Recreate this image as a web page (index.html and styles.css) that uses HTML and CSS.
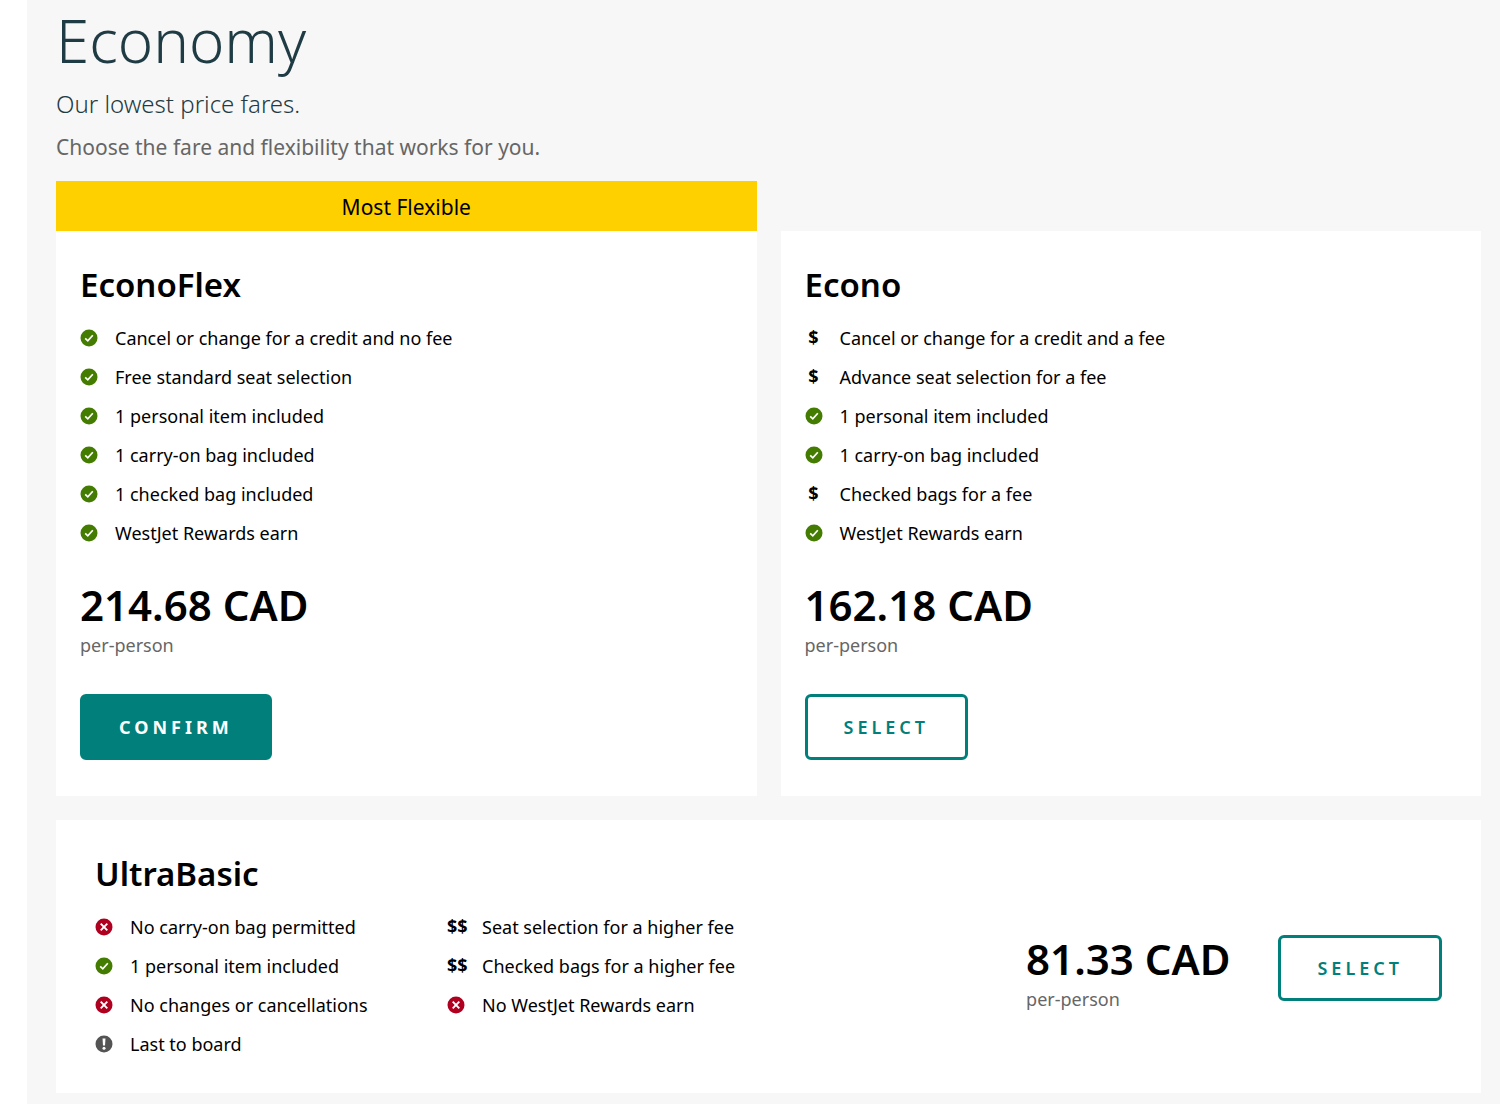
FILE: index.html
```html
<!DOCTYPE html>
<html lang="en">
<head>
<meta charset="utf-8">
<meta name="viewport" content="width=device-width, initial-scale=1">
<title>Economy fares</title>
<link rel="stylesheet" href="styles.css">
</head>
<body>
<svg class="sprite" aria-hidden="true">
  <symbol id="yes" viewBox="0 0 18 18"><circle cx="9" cy="9" r="8.5" fill="#437c00"/><path d="M5.2 9.4l2.6 2.5 5-5.6" fill="none" stroke="#fff" stroke-width="1.7"/></symbol>
  <symbol id="no" viewBox="0 0 18 18"><circle cx="9" cy="9" r="8.5" fill="#b00020"/><path d="M5.7 5.7l6.6 6.6M12.3 5.7l-6.6 6.6" fill="none" stroke="#fff" stroke-width="1.9"/></symbol>
  <symbol id="note" viewBox="0 0 18 18"><circle cx="9" cy="9" r="8.5" fill="#545454"/><path d="M7.5 3.5h3l-.5 7H8z" fill="#fff"/><circle cx="9" cy="13.2" r="1.5" fill="#fff"/></symbol>
</svg>
<main class="cabin">
  <header>
    <h1 class="cabin-title">Economy</h1>
    <p class="cabin-lead">Our lowest price fares.</p>
    <p class="cabin-hint">Choose the fare and flexibility that works for you.</p>
  </header>

  <div class="fares">
    <section class="fare">
      <p class="ribbon">Most Flexible</p>
      <div class="card">
        <h2 class="fare-name">EconoFlex</h2>
        <ul class="features">
          <li><svg class="icon"><use href="#yes"/></svg>Cancel or change for a credit and no fee</li>
          <li><svg class="icon"><use href="#yes"/></svg>Free standard seat selection</li>
          <li><svg class="icon"><use href="#yes"/></svg>1 personal item included</li>
          <li><svg class="icon"><use href="#yes"/></svg>1 carry-on bag included</li>
          <li><svg class="icon"><use href="#yes"/></svg>1 checked bag included</li>
          <li><svg class="icon"><use href="#yes"/></svg>WestJet Rewards earn</li>
        </ul>
        <div class="cost">
          <p class="price">214.68 CAD</p>
          <p class="per">per-person</p>
        </div>
        <button type="button" class="btn btn-solid">CONFIRM</button>
      </div>
    </section>

    <section class="fare">
      <div class="card">
        <h2 class="fare-name">Econo</h2>
        <ul class="features">
          <li><span class="fee">$</span>Cancel or change for a credit and a fee</li>
          <li><span class="fee">$</span>Advance seat selection for a fee</li>
          <li><svg class="icon"><use href="#yes"/></svg>1 personal item included</li>
          <li><svg class="icon"><use href="#yes"/></svg>1 carry-on bag included</li>
          <li><span class="fee">$</span>Checked bags for a fee</li>
          <li><svg class="icon"><use href="#yes"/></svg>WestJet Rewards earn</li>
        </ul>
        <div class="cost">
          <p class="price">162.18 CAD</p>
          <p class="per">per-person</p>
        </div>
        <button type="button" class="btn">SELECT</button>
      </div>
    </section>

    <section class="card card-wide">
      <div>
        <h2 class="fare-name">UltraBasic</h2>
        <div class="feature-columns">
          <ul class="features">
            <li><svg class="icon"><use href="#no"/></svg>No carry-on bag permitted</li>
            <li><svg class="icon"><use href="#yes"/></svg>1 personal item included</li>
            <li><svg class="icon"><use href="#no"/></svg>No changes or cancellations</li>
            <li><svg class="icon"><use href="#note"/></svg>Last to board</li>
          </ul>
          <ul class="features">
            <li><span class="fee">$$</span>Seat selection for a higher fee</li>
            <li><span class="fee">$$</span>Checked bags for a higher fee</li>
            <li><svg class="icon"><use href="#no"/></svg>No WestJet Rewards earn</li>
          </ul>
        </div>
      </div>
      <div class="buy">
        <div class="cost">
          <p class="price">81.33 CAD</p>
          <p class="per">per-person</p>
        </div>
        <button type="button" class="btn">SELECT</button>
      </div>
    </section>
  </div>
</main>
</body>
</html>
```

FILE: styles.css
```css
* { box-sizing: border-box; }

body {
  margin: 0;
  background: #fff;
  color: #000;
  font-family: "Noto Sans", sans-serif;
  font-size: 18px;
}

h1, h2, p, ul { margin: 0; padding: 0; }

.sprite { display: none; }

.cabin {
  min-height: 100vh;
  margin-left: 27px;
  padding: 4px 19px 11px 29px;
  background: #f7f7f7;
}

.cabin-title {
  color: #1f3b44;
  font-size: 60px;
  font-weight: 300;
  line-height: 72px;
}

.cabin-lead {
  margin-top: 12px;
  color: #1f3b44;
  font-size: 24px;
  font-weight: 300;
  line-height: 32px;
}

.cabin-hint {
  margin: 13px 0 20px;
  color: #666;
  font-size: 21px;
  line-height: 28px;
}

.fares {
  display: grid;
  grid-template-columns: 1fr 1fr;
  gap: 24px;
}

.fare {
  display: flex;
  flex-direction: column;
  justify-content: flex-end;
}

.ribbon {
  padding-top: 2px;
  background: #ffd000;
  font-size: 21px;
  line-height: 48px;
  text-align: center;
}

.card {
  padding: 32px 24px 36px;
  background: #fff;
}

.fare-name {
  font-size: 33px;
  font-weight: 600;
  line-height: 44px;
}

.features {
  margin-top: 12px;
  list-style: none;
}

.features li {
  display: grid;
  grid-template-columns: 35px 1fr;
  align-items: center;
  line-height: 39px;
}

.icon {
  width: 18px;
  height: 18px;
  margin-bottom: 2px;
}

.fee {
  min-width: 18px;
  justify-self: start;
  padding-bottom: 2px;
  font-weight: 700;
  line-height: 37px;
  text-align: center;
}

.card > .cost { margin: 24px 0 37px; }

.price {
  font-size: 42px;
  font-weight: 600;
  line-height: 56px;
}

.per {
  color: #666;
  line-height: 24px;
}

.btn {
  padding: 18px 36px;
  border: 3px solid #007f7b;
  border-radius: 6px;
  background: #fff;
  color: #007f7b;
  font: 600 18px/24px "Noto Sans", sans-serif;
  letter-spacing: 4px;
  cursor: pointer;
}

.btn-solid {
  background: #007f7b;
  color: #fff;
  font-weight: 700;
}

.card-wide {
  grid-column: 1 / -1;
  display: flex;
  align-items: center;
  justify-content: space-between;
  padding: 32px 39px 29px;
}

.feature-columns {
  display: grid;
  grid-template-columns: 352px 1fr;
}

.buy {
  display: flex;
  align-items: center;
  gap: 48px;
  padding-top: 20px;
}

.buy .cost { padding-top: 6px; }
```
